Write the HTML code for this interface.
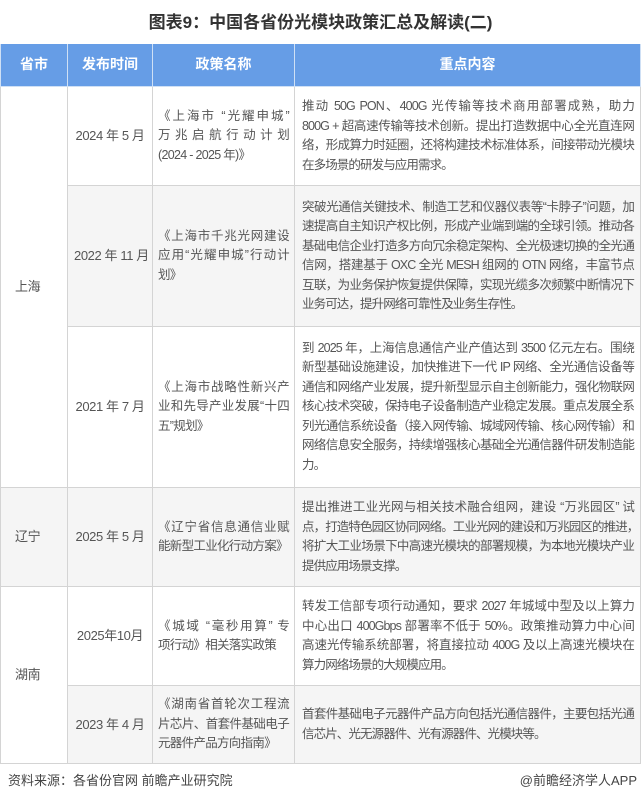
<!DOCTYPE html>
<html><head><meta charset="utf-8"><style>
body{margin:0;width:641px;height:806px;background:#fff;font-family:"Liberation Sans","Noto Sans CJK SC",sans-serif;color:#555;position:relative;overflow:hidden}
.title{position:absolute;top:8px;left:0;width:641px;text-align:center;font-size:17px;font-weight:bold;color:#333}
table{position:absolute;top:44px;left:0;width:641px;border-collapse:collapse;table-layout:fixed}
td,th{border:1px solid #d4d4d4;font-size:12.5px;line-height:19.5px;padding:0 6px;letter-spacing:-0.4px;overflow:hidden}
th{background:#669de6;color:#fff;font-size:14px;font-weight:bold;height:42px;border-color:#cfe0f5;border-top:none;letter-spacing:0}
.g td.x{background:#f5f5f5}
.d{text-align:center;white-space:nowrap;font-size:13px}
.p,.c{white-space:nowrap}
.p{letter-spacing:-0.7px;padding:0 5px}
.c{letter-spacing:-0.9px;padding:0 6px 0 7px}
.p span,.c span{display:block;text-align:justify;text-align-last:justify}
.p span.l,.c span.l{text-align-last:left}
.prov{padding-left:14px;font-size:13px}
.foot{position:absolute;top:770px;left:8px;font-size:13px;color:#444}
.foot2{position:absolute;top:770px;right:4px;font-size:13px;color:#444}
</style></head><body>
<div class="title">图表9：中国各省份光模块政策汇总及解读(二)</div>
<table>
<colgroup><col style="width:67px"><col style="width:85px"><col style="width:142px"><col></colgroup>
<tr><th>省市</th><th>发布时间</th><th>政策名称</th><th>重点内容</th></tr>
<tr style="height:99px"><td rowspan="3" class="prov">上海</td><td class="d">2024 年 5 月</td><td class="p"><span>《上海市 “光耀申城”</span><span>万 兆 启 航 行 动 计 划</span><span class="l">(2024 - 2025 年)》</span></td><td class="c"><span>推动 50G PON、400G 光传输等技术商用部署成熟，助力</span><span>800G + 超高速传输等技术创新。提出打造数据中心全光直连网</span><span>络，形成算力时延圈，还将构建技术标准体系，间接带动光模块</span><span class="l">在多场景的研发与应用需求。</span></td></tr>
<tr style="height:141px" class="g"><td class="d x">2022 年 11 月</td><td class="p x"><span>《上海市千兆光网建设</span><span>应用“光耀申城”行动计</span><span class="l">划》</span></td><td class="c x"><span>突破光通信关键技术、制造工艺和仪器仪表等“卡脖子”问题，加</span><span>速提高自主知识产权比例，形成产业端到端的全球引领。推动各</span><span>基础电信企业打造多方向冗余稳定架构、全光极速切换的全光通</span><span>信网，搭建基于 OXC 全光 MESH 组网的 OTN 网络，丰富节点</span><span>互联，为业务保护恢复提供保障，实现光缆多次频繁中断情况下</span><span class="l">业务可达，提升网络可靠性及业务生存性。</span></td></tr>
<tr style="height:161px"><td class="d">2021 年 7 月</td><td class="p"><span>《上海市战略性新兴产</span><span>业和先导产业发展“十四</span><span class="l">五”规划》</span></td><td class="c"><span>到 2025 年，上海信息通信产业产值达到 3500 亿元左右。围绕</span><span>新型基础设施建设，加快推进下一代 IP 网络、全光通信设备等</span><span>通信和网络产业发展，提升新型显示自主创新能力，强化物联网</span><span>核心技术突破，保持电子设备制造产业稳定发展。重点发展全系</span><span>列光通信系统设备（接入网传输、城域网传输、核心网传输）和</span><span>网络信息安全服务，持续增强核心基础全光通信器件研发制造能</span><span class="l">力。</span></td></tr>
<tr style="height:99px" class="g"><td class="prov x">辽宁</td><td class="d x">2025 年 5 月</td><td class="p x"><span>《辽宁省信息通信业赋</span><span class="l">能新型工业化行动方案》</span></td><td class="c x"><span>提出推进工业光网与相关技术融合组网，建设 “万兆园区” 试</span><span>点，打造特色园区协同网络。工业光网的建设和万兆园区的推进，</span><span>将扩大工业场景下中高速光模块的部署规模，为本地光模块产业</span><span class="l">提供应用场景支撑。</span></td></tr>
<tr style="height:99px"><td rowspan="2" class="prov">湖南</td><td class="d">2025年10月</td><td class="p"><span>《城域 “毫秒用算” 专</span><span class="l">项行动》相关落实政策</span></td><td class="c"><span>转发工信部专项行动通知，要求 2027 年城域中型及以上算力</span><span>中心出口 400Gbps 部署率不低于 50%。政策推动算力中心间</span><span>高速光传输系统部署，将直接拉动 400G 及以上高速光模块在</span><span class="l">算力网络场景的大规模应用。</span></td></tr>
<tr style="height:78px" class="g"><td class="d x">2023 年 4 月</td><td class="p x"><span>《湖南省首轮次工程流</span><span>片芯片、首套件基础电子</span><span class="l">元器件产品方向指南》</span></td><td class="c x"><span>首套件基础电子元器件产品方向包括光通信器件，主要包括光通</span><span class="l">信芯片、光无源器件、光有源器件、光模块等。</span></td></tr>
</table>
<div class="foot">资料来源：各省份官网 前瞻产业研究院</div>
<div class="foot2">@前瞻经济学人APP</div>
</body></html>
